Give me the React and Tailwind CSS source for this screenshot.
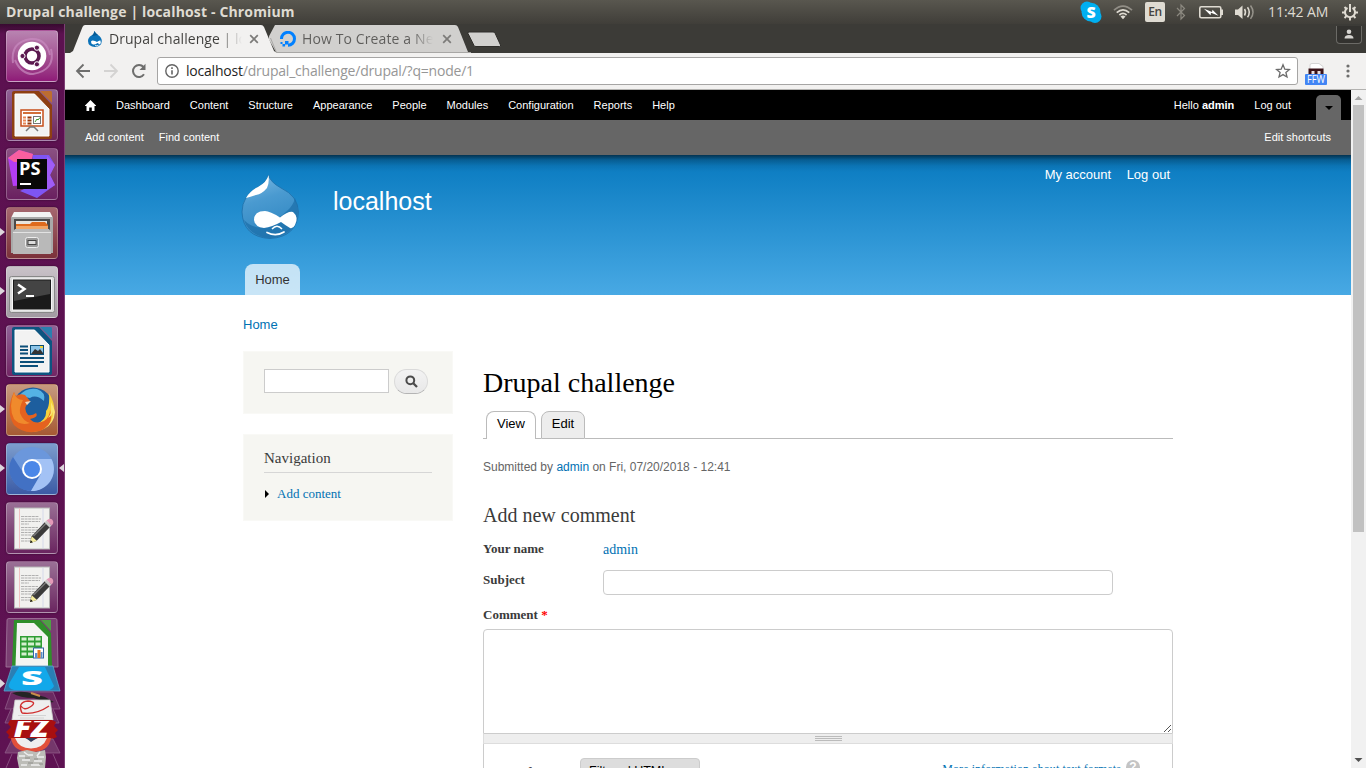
import React from "react";

const ubuntu = "font-['Open_Sans','Noto_Sans',sans-serif]";
const sans = "font-['Liberation_Sans',Arial,sans-serif]";
const serif = "font-['Liberation_Serif',Georgia,serif]";

/* ---------- top panel ---------- */

function TopPanel() {
  return (
    <div className={`${ubuntu} flex h-6 shrink-0 items-center justify-between bg-linear-to-b from-[#59574f] to-[#403e39] pl-1.5 text-[#dfdbd2]`}>
      <span className="text-[14px] leading-6 font-bold whitespace-nowrap tracking-[0.15px]">Drupal challenge | localhost - Chromium</span>
      <div className="flex h-6 w-[286px] items-center">
        <svg className="h-6 w-[22px]" viewBox="0 0 22 24">
          <circle cx="7" cy="8" r="6.5" fill="#00aff0" />
          <circle cx="15" cy="16.5" r="6.5" fill="#00aff0" />
          <circle cx="11" cy="12.2" r="9.4" fill="#00aff0" />
          <text x="11" y="18" textAnchor="middle" fontFamily="Open Sans" fontWeight="800" fontSize="16" fill="#fff">S</text>
        </svg>
        <svg className="ml-[11px] h-6 w-5" viewBox="0 0 20 24" fill="none" stroke="#dfdbd2" strokeWidth="1.7">
          <path d="M1 10.2 Q10 2 19 10.2" opacity=".45" />
          <path d="M3.7 12.6 Q10 7 16.3 12.6" />
          <path d="M6.4 15 Q10 11.8 13.6 15" />
          <path d="M7.5 16.6 Q10 14.4 12.5 16.6 L10 19.3Z" fill="#dfdbd2" stroke="none" />
        </svg>
        <span className="ml-3 flex h-5 w-5 items-center justify-center rounded-[2px] bg-[#dfdbd2] text-[12px] font-semibold text-[#45443f] tracking-[-0.5px]">En</span>
        <svg className="ml-[11px] h-6 w-[10px]" viewBox="0 0 10 24" fill="none" stroke="#8c8980" strokeWidth="1.2">
          <path d="M1 8 L8.5 15.5 L5 19 V5 L8.5 8.5 L1 16" />
        </svg>
        <svg className="ml-[12px] h-6 w-[26px]" viewBox="0 0 26 24">
          <rect x="1.8" y="6.8" width="21" height="11" rx="1.5" fill="none" stroke="#dfdbd2" strokeWidth="1.6" />
          <path d="M23 9.5h2v5.500h-2z" fill="#dfdbd2" />
          <path d="M6 8.800l8 3.200 .5-2.300 6 6-7.500-3-.5 2.500z" fill="#fff" />
        </svg>
        <svg className="ml-[11px] h-6 w-[20px]" viewBox="0 0 20 24" fill="none" stroke="#dfdbd2" strokeWidth="1.5">
          <path d="M0 9.500h3l4.500-4v13.500l-4.500-4H0z" fill="#dfdbd2" stroke="none" />
          <path d="M9.500 9q2 3.200 0 6.500" />
          <path d="M12.500 7.200q3.600 5 0 10" />
          <path d="M15.500 5.500q5 6.700 0 13.400" opacity=".5" />
        </svg>
        <span className="ml-[13px] text-[14px] whitespace-nowrap leading-6 tracking-[-0.05px]">11:42 AM</span>
        <svg className="ml-auto mr-2 h-6 w-4" viewBox="0 0 16 24" fill="none" stroke="#dfdbd2">
          <path d="M5.500 7.800A5 5 0 1 0 10.500 7.800" strokeWidth="2" />
          <path d="M8 4v8" strokeWidth="2" />
          <path d="M0 12.500h3M13 12.500h3M8 17.500v3M2.500 7l2 2M13.500 7l-2 2M2.500 18l2-2M13.500 18l-2-2" strokeWidth="1.900" />
        </svg>
      </div>
    </div>
  );
}

/* ---------- launcher ---------- */

function Tile({ tint, left, right, children }) {
  return (
    <div className="relative flex h-[52px] w-full shrink-0 pl-1.5">
      <div className={`h-[52px] w-[52px] overflow-hidden rounded-[4px] border border-white/25 shadow-[0_0_2px_rgba(0,0,0,0.5)] ${tint}`}>
        <svg className="-m-px h-[52px] w-[52px]" viewBox="0 0 52 52">{children}</svg>
      </div>
      {left && (
        <svg className="absolute left-0 top-[20px] h-[10px] w-[5px]" viewBox="0 0 5 10"><path d="M0 1L5 5L0 9Z" fill="#ddd6dc" /></svg>
      )}
      {right && (
        <svg className="absolute right-0 top-[20px] h-[10px] w-[5px]" viewBox="0 0 5 10"><path d="M5 1L0 5L5 9Z" fill="#ddd6dc" /></svg>
      )}
    </div>
  );
}

function Office({ edge, corner, children }) {
  return (
    <g>
      <path d="M8 2H33L46 16V48Q46 50 44 50H8Q6 50 6 48V4Q6 2 8 2Z" fill={edge} />
      <path d="M34 2H45Q46 2 46 4V14Z" fill={corner} />
      <path d="M9 5H29L43 20V47H9Z" fill="#f2f2f2" stroke="#fff" strokeWidth="1" />
      <path d="M27 3L45 21V17L31 3Z" fill={edge} />
      {children}
    </g>
  );
}

function Notepad() {
  return (
    <g>
      <rect x="8.500" y="6" width="35" height="41" fill="#f1f1ef" stroke="#b5b5b5" />
      <path d="M13.500 6.500v40" stroke="#f0b8b8" strokeWidth=".8" />
      <path d="M37 6.500v40" stroke="#cfd4ea" strokeWidth=".8" />
      <path d="M15 14.500h18M15 17h20M15 19.500h19M15 22h8M15 25.500h17M15 28h19M15 30.500h18M15 33h12M15 36.500h14M15 39h9" stroke="#a0a0a0" strokeWidth=".8" strokeDasharray="3 .6" />
      <path d="M24 41L25.500 34.500L39 20L44 25L30.500 39Z" fill="#3a3a3a" />
      <path d="M27.500 34L40 21.500" stroke="#777" strokeWidth="1.400" />
      <path d="M24 41L25.800 34.200L31 39Z" fill="#f4eb9c" />
      <path d="M24 41l.8-2.800 2 2z" fill="#111" />
      <path d="M38.500 20.500L40.500 18.500L45.500 23.500L43.500 25.500Z" fill="#c9c9c9" />
      <path d="M40.500 18.500Q44 15.500 46.500 18Q48.500 21 45.500 23.500Z" fill="#e49ab8" />
    </g>
  );
}

function FoldedStack() {
  return (
    <svg className="block h-[151px] w-full shrink-0" viewBox="0 617 65 151" preserveAspectRatio="xMinYMin slice">
      <defs>
        <clipPath id="fz"><rect x="0" y="721" width="65" height="18" /></clipPath>
      </defs>
      <path d="M7 620Q7 618.500 9 618.500H55Q57 618.500 57 620L58 667H6Z" fill="#7a3f72" stroke="#a57ba0" strokeWidth=".8" />
      <path d="M14 620H40L51 633L52 666H12Z" fill="#2f8f2a" />
      <path d="M41 620H51V631Z" fill="#4fa045" />
      <path d="M17 623H34L48 637V666H15.500Z" fill="#f4f4f2" />
      <path d="M20 636H42V658H20Z" fill="#2f9e34" />
      <path d="M21.500 637.500h5v3h-5zM28 637.500h6v3h-6zM35.500 637.500h5v3h-5zM21.500 642.500h5v3h-5zM28 642.500h6v3h-6zM35.500 642.500h5v3h-5zM21.500 647.500h5v3h-5zM28 647.500h6v3h-6zM21.500 652.500h5v3h-5zM28 652.500h6v3h-6z" fill="#d6f0d0" />
      <rect x="33.500" y="648" width="10" height="10" fill="#fff" stroke="#3465a4" />
      <path d="M35 653h2.500v5H35zM40.500 652h2v6h-2z" fill="#5b8fd0" />
      <path d="M37.500 650h3v8h-3z" fill="#e8771d" />
      <path d="M12 666H53L60 691H4Z" fill="#2a7fb4" />
      <path d="M12 666H53L60 691H4Z" fill="none" stroke="#5da3cb" strokeWidth=".8" />
      <path d="M19 667H45L54 686Q52 691 45 690H14Q6 688 10 682Z" fill="#12a8ea" />
      <text x="0" y="0" transform="translate(32 684.500) scale(2 1)" textAnchor="middle" fontFamily="Open Sans" fontWeight="800" fontSize="19" fill="#fff">S</text>
      <path d="M0 679L5 683.500L0 688Z" fill="#ddd6dc" />
      <path d="M11 692H53L60 709H5Z" fill="#6b2a62" stroke="#8f5c89" strokeWidth=".8" />
      <path d="M12 693Q22 690 34 694L45 697L54 702L47 703L34 698Q20 698 12 693Z" fill="#242424" />
      <path d="M31 693l9 3" stroke="#c98d4b" strokeWidth="2" />
      <path d="M11 709L5 723H59L53 709" fill="#6b2a62" stroke="#8f5c89" strokeWidth=".8" />
      <path d="M15 700H50L53 720H12Z" fill="#eee" stroke="#ccc" strokeWidth=".8" />
      <path d="M22 713Q17 702 28 701Q38 702 30 707Q24 711 21 706M22 713Q36 715 49 706" fill="none" stroke="#d03030" strokeWidth="1.400" />
      <path d="M18 715.500h28M20 718h24" stroke="#ccc" strokeWidth=".8" />
      <path d="M10 720L8 724L11 727L6 732L9 735L8 738L14 740H50L57 737L55 733L58 730L54 726L56 722L52 720Z" fill="#a80f10" />
      <g clipPath="url(#fz)">
        <text x="0" y="0" transform="translate(31 737) scale(1.150 1)" textAnchor="middle" fontFamily="Open Sans" fontStyle="italic" fontWeight="800" fontSize="27" fill="#fff">FZ</text>
      </g>
      <path d="M12 739H53L60 753H5Z" fill="#74376b" stroke="#8f5c89" strokeWidth=".8" />
      <path d="M11 738Q13 752 31 752Q49 752 51 738H43L36 740H27L20 738Z" fill="#e2503a" />
      <path d="M15 738Q19 748.500 31 748.500Q43 748.500 47 738H38L31 741L25 738Z" fill="#eee" />
      <path d="M26 738H37L31 742Z" fill="#2e3f5c" />
      <path d="M12 754L6 768M53 754L59 768" stroke="#8f5c89" strokeWidth=".8" />
      <path d="M18 752L27 750L36 752L45 750L46 757L45 768H19L17 758Z" fill="#bdbdb8" />
      <path d="M19 756h6M28 755h5M37 757h7M22 760h8M34 761h8M21 765h6M31 765h9M24 752l4 3M40 752l-3 4" stroke="#eee" strokeWidth="1.500" />
      <path d="M25 758h5M34 759h4M28 763h5M39 764h4" stroke="#8e8e8a" strokeWidth="1" />
    </svg>
  );
}

function Launcher() {
  return (
    <nav className="flex w-[65px] shrink-0 flex-col overflow-hidden border-r border-[#7d3f74] bg-linear-to-b from-[#380a30] via-[#5c1150] via-[10px] to-[#5e1252]">
      <div className="flex h-[593px] shrink-0 flex-col gap-[7px] pt-1.5">
        <Tile tint="bg-linear-to-b from-[#b884b1] to-[#8f1a78]">
          <path d="M7 33Q4 12 25 9Q40 8 44 25" fill="none" stroke="#c98bc1" strokeWidth="2" opacity=".7" />
          <path d="M45 19Q50 40 27 44Q15 44 9 30" fill="none" stroke="#c98bc1" strokeWidth="2" opacity=".7" />
          <circle cx="26" cy="26" r="14.300" fill="#fff" />
          <circle cx="26" cy="26" r="7" fill="none" stroke="#5c1a50" strokeWidth="3.600" />
          <g stroke="#fff" strokeWidth="1"><circle cx="16.500" cy="26" r="2.600" fill="#5c1a50" /><circle cx="30.900" cy="17.700" r="2.600" fill="#5c1a50" /><circle cx="30.900" cy="34.300" r="2.600" fill="#5c1a50" /></g>
        </Tile>
        <Tile tint="bg-linear-to-b from-[#8f6296] to-[#6d2457]">
          <Office edge="#8e3f12" corner="#bd6d30">
            <rect x="15" y="21" width="22" height="16" fill="#fff" stroke="#c64e1a" strokeWidth="1.500" />
            <path d="M17 24h18" stroke="#d2703a" strokeWidth="2" />
            <path d="M17 28.500h3M17 31.500h3M17 34.500h3" stroke="#e88757" strokeWidth="2" />
            <path d="M21.500 28.500h4M21.500 31.500h4M21.500 34.500h4" stroke="#96380c" strokeWidth="2" />
            <rect x="27.500" y="27.500" width="7" height="7" fill="#fff" stroke="#777" />
            <path d="M29 33l2-3 1 1 2-2.500" stroke="#3a9c2f" fill="none" />
            <path d="M20 42l4-4h4l4 4" stroke="#777" strokeWidth="1.500" fill="none" />
          </Office>
        </Tile>
        <Tile tint="bg-linear-to-b from-[#8a5082] to-[#6a2060]">
          <path d="M2 10L13 2L27 6L22 37L7 38Z" fill="#b43df5" />
          <path d="M2 10L13 2L27 6L25 14L8 14Z" fill="#f95fa0" />
          <path d="M27 7L43 7L49 17L44 27L49 37L31 50L14 43L24 38Z" fill="#7e55f4" />
          <path d="M41 8L49 17L44 27L49 37L41 42Z" fill="#a05cf6" />
          <rect x="11" y="11" width="30" height="30" fill="#080808" />
          <text x="13" y="26.800" fontFamily="Open Sans" fontWeight="700" fontSize="17.500" textLength="21.500" lengthAdjust="spacingAndGlyphs" fill="#fff">PS</text>
          <path d="M14 36h11" stroke="#fff" strokeWidth="2" />
        </Tile>
        <Tile tint="bg-linear-to-b from-[#a5676f] to-[#7b313a]" left>
          <path d="M8 5H44L47 11H5Z" fill="#f3f3f3" />
          <path d="M5 10H47V46H5Z" fill="#a9a9a9" />
          <path d="M8 12H44V27H8Z" fill="#4a4a4a" />
          <path d="M10 14H41V27H10Z" fill="#e8e4dd" />
          <path d="M10 17H24L26 15H39L42 18V25H10Z" fill="#df6b1d" />
          <path d="M10 19H42V25H10Z" fill="#f2a665" />
          <path d="M7 25L9 22H43L45 25V47H7Z" fill="#b9b9b9" />
          <path d="M7 25.500H45" stroke="#e2e2e2" />
          <rect x="19.500" y="30.500" width="13" height="10" rx="2" fill="#999" stroke="#eee" />
          <rect x="22" y="33.500" width="8" height="4" fill="#ddd" stroke="#444" />
        </Tile>
        <Tile tint="bg-linear-to-b from-[#c9c2c8] to-[#a29aa2]" left>
          <rect x="3.500" y="10.500" width="45" height="36" rx="2" fill="#dcdcdc" stroke="#888" />
          <rect x="6" y="12.500" width="40" height="32" fill="#f6f6f6" />
          <rect x="7" y="13.500" width="38" height="30" fill="#1a1a1a" />
          <path d="M8 14.500H44V28L8 35Z" fill="#444" />
          <path d="M12 18.500L18.500 23L12 27.500" fill="none" stroke="#fff" strokeWidth="2.500" />
          <path d="M20 30h8" stroke="#fff" strokeWidth="2" />
        </Tile>
        <Tile tint="bg-linear-to-b from-[#8f6296] to-[#722564]">
          <Office edge="#0d5480" corner="#2a7fae">
            <path d="M14 21.500h8M14 25h8M14 28.500h8M14 33h24M14 37h24M14 41h18" stroke="#0c4f79" strokeWidth="2" />
            <rect x="24.500" y="20.500" width="13" height="9" fill="#8cc4e8" stroke="#0c4f79" strokeWidth="1" />
            <path d="M25 29l4-5 3 2 2-2 3 4v1z" fill="#333" />
            <path d="M34 21h3v2h-3z" fill="#f3d23b" />
          </Office>
        </Tile>
        <Tile tint="bg-linear-to-b from-[#c79a7f] to-[#a55a33]" left>
          <circle cx="27" cy="23.500" r="20" fill="#1d5e9e" />
          <path d="M13 12Q20 3 31 5Q40 8 38 17Q30 10 24 14Z" fill="#54b2e4" />
          <path d="M43 9Q52 24 46 37Q40 47 26 48L30 40Q41 36 40 27Q44 23 43 9Z" fill="#f5d13c" />
          <path d="M8 8Q9 11 10 12Q14 9 19 11L24 17L20 22Q18 26 22 31Q26 32 30 29Q33 33 24 35Q29 41 38 37Q44 33 44 26Q49 41 34 47Q18 51 8 41Q-1 27 8 8Z" fill="#e4621f" />
          <path d="M45 22Q46 29 42 34Q47 31 47 26Q48 38 38 45Q48 40 49 28Q48 24 45 18Z" fill="#fbe573" />
          <path d="M8 8Q10 16 17 16Q13 24 14 29Q17 37 24 39Q14 42 8 35Q2 23 8 8Z" fill="#f08a2c" />
          <path d="M19 18l6-1-4 4z" fill="#f3d8bb" />
        </Tile>
        <Tile tint="bg-linear-to-b from-[#7d9dcd] to-[#3c5ba5]" left right>
          <circle cx="26" cy="26" r="22" fill="#6b97dc" />
          <path d="M7 14A22 22 0 0 0 25 48L34 32Q26 39 18 31Z" fill="#4271c4" />
          <path d="M26 16H45.500A22 22 0 0 1 25 48L35 31Z" fill="#a3c2f5" />
          <circle cx="26" cy="26" r="10" fill="#fff" />
          <circle cx="26" cy="26" r="8" fill="#4b87e8" />
        </Tile>
        <Tile tint="bg-linear-to-b from-[#9a7096] to-[#6a2560]"><Notepad /></Tile>
        <Tile tint="bg-linear-to-b from-[#9a7096] to-[#6a2560]"><Notepad /></Tile>
      </div>
      <FoldedStack />
    </nav>
  );
}

/* ---------- browser chrome ---------- */

function Druplet({ className }) {
  return (
    <svg className={className} viewBox="0 0 16 16">
      <path d="M7.500 0Q8 2 11 4Q14.800 6.500 14.800 10Q14.500 15.700 8 16Q1.200 15.700 1 10Q1 6.500 4.500 4.500Q7 3 7.500 0Z" fill="#0a72b8" />
      <path d="M7.500 0Q8 2 11 4L5 5Q7 3 7.500 0Z" fill="#055a94" />
      <path d="M4 10.500Q5 8.800 8 10L10 11Q12 9 13.500 9.500Q14.500 12.500 12.800 13.500L10.500 12Q8 14 6 13.500Q3.800 12.800 4 10.500Z" fill="#fff" />
      <path d="M8 14.500q2 .8 3.500-.3" stroke="#fff" fill="none" strokeWidth=".8" />
    </svg>
  );
}

function Cross() {
  return <svg className="h-2.5 w-2.5 shrink-0" viewBox="0 0 10 10"><path d="M1.200 1.200L8.800 8.800M8.800 1.200L1.200 8.800" stroke="#7c7b79" strokeWidth="1.700" /></svg>;
}

function TabStrip() {
  return (
    <div className={`${ubuntu} flex h-[29px] shrink-0 bg-[#3c3b37] pl-[5px] text-[14px]`}>
      <div className="relative z-10 flex h-[29px] w-[207px] shrink-0 items-center pl-[17px]">
        <svg className="absolute inset-0 h-[29px] w-[207px]" viewBox="0 0 207 29">
          <path d="M0 29L3 27L12.500 3Q13.500 1 15 1H191Q193 1 194 3L204 27L207 29Z" fill="#f2f1f0" />
        </svg>
        <Druplet className="relative h-4 w-4" />
        <span className="relative ml-1.5 w-[133px] overflow-hidden whitespace-nowrap bg-linear-to-r from-[#3f3e3c] from-[82%] to-transparent bg-clip-text text-transparent tracking-[0.05px]">Drupal challenge | localhost</span>
        <span className="relative ml-[7px]"><Cross /></span>
      </div>
      <div className="relative -ml-[8px] flex h-[29px] w-[202px] shrink-0 items-center pl-[11px]">
        <svg className="absolute inset-0 h-[29px] w-[202px]" viewBox="0 0 202 29">
          <path d="M-1 14L6 1H186Q188 1 189 3L199 28H7Z" fill="#d1d0ce" />
          <path d="M1.500 14L7.500 28.500H202" fill="none" stroke="#a8a7a5" />
        </svg>
        <svg className="relative h-4 w-4" viewBox="0 0 16 16">
          <path d="M1.500 8A6.500 6.500 0 1 1 8 14.300" fill="none" stroke="#0080ff" strokeWidth="3" />
          <path d="M5 10h3.500v3.500H5zM2.500 13h2.600v2.600H2.500zM.5 11h2v2h-2z" fill="#0080ff" />
        </svg>
        <span className="relative ml-[6px] w-[131px] overflow-hidden whitespace-nowrap bg-linear-to-r from-[#5d5c5a] from-[84%] to-transparent bg-clip-text text-transparent tracking-[0.12px]">How To Create a New User</span>
        <span className="relative ml-[9px]"><Cross /></span>
      </div>
      <svg className="-ml-[5px] h-[29px] w-[36px]" viewBox="0 0 36 29">
        <path d="M3 8H27Q28.500 8 29 9L34.500 21Q35 22.500 33.500 22.500H10Q8.500 22.500 8 21.500L2 9.500Q1.500 8 3 8Z" fill="#d1d0ce" stroke="#2e2d2a" />
      </svg>
      <div className="mr-1 ml-auto mt-0.5 flex h-[18px] w-[26px] items-center justify-center rounded-b-[4px] border border-t-0 border-[#6b6a66] bg-[#33322f]">
        <svg className="-mt-0.5 h-3 w-3" viewBox="0 0 12 12"><circle cx="6" cy="3.800" r="2.300" fill="#d6d4d0" /><path d="M1.500 10.500Q1.500 7 6 7Q10.500 7 10.500 10.500Z" fill="#d6d4d0" /></svg>
      </div>
    </div>
  );
}

function AddressRow() {
  return (
    <div className="flex h-[37px] shrink-0 items-center border-b border-[#b3b2b0] bg-[#f2f1f0] pl-2.5">
      <svg className="h-4 w-4" viewBox="0 0 16 16" fill="none" stroke="#6e6e6d" strokeWidth="1.800"><path d="M15 8H2.500M8.500 1.500L2 8L8.500 14.500" /></svg>
      <svg className="ml-3 h-4 w-4" viewBox="0 0 16 16" fill="none" stroke="#d4d3d2" strokeWidth="1.800"><path d="M1 8H13.500M7.500 1.500L14 8L7.500 14.500" /></svg>
      <svg className="ml-3 h-4 w-4" viewBox="0 0 16 16"><path d="M13 11.300A6 6 0 1 1 12.500 4" fill="none" stroke="#6e6e6d" strokeWidth="2" /><path d="M14.500 .8V7H8.500Z" fill="#6e6e6d" /></svg>
      <div className="ml-[10px] flex h-7 w-[1141px] items-center rounded-[3px] border border-[#a6a5a4] bg-white pl-1.5">
        <svg className="h-4 w-4" viewBox="0 0 16 16"><circle cx="8" cy="8" r="6.200" fill="none" stroke="#646464" strokeWidth="1.400" /><path d="M8 7.200v4.300M8 4.200v1.700" stroke="#646464" strokeWidth="1.600" /></svg>
        <span className={`${ubuntu} ml-1.5 whitespace-nowrap text-[14px] leading-6 text-[#969696] tracking-[-0.21px]`}>
          <span className="text-[#1f1f1f]">localhost</span>/drupal_challenge/drupal/?q=node/1
        </span>
        <svg className="mr-[6px] ml-auto h-4 w-4" viewBox="0 0 16 16"><path d="M8 1.800L9.800 6.200L14.400 6.500L10.900 9.500L12 14L8 11.600L4 14L5.100 9.500L1.600 6.500L6.200 6.200Z" fill="none" stroke="#6b6b6b" strokeWidth="1.300" /></svg>
      </div>
      <svg className="mt-[3px] ml-[6px] h-[26px] w-6" viewBox="0 0 24 26">
        <path d="M6 5Q6 3.500 8 3.500H15L19 6.500V16H6Z" fill="#fff" stroke="#ccc" strokeWidth=".8" />
        <path d="M4.500 8.500H19.500V14.500H4.500Z" fill="#3a1218" />
        <path d="M7.500 11h3v3h-3zM13.500 11h3v3h-3z" fill="#e9dede" />
        <rect x="1" y="14" width="22" height="11" rx="1" fill="#4285f4" />
        <text x="12" y="23.400" textAnchor="middle" fontFamily="Open Sans" fontSize="10.500" textLength="18" lengthAdjust="spacingAndGlyphs" fill="#fff">FFW</text>
      </svg>
      <svg className="ml-[18px] h-4 w-1" viewBox="0 0 4 16" fill="#6e6e6d"><circle cx="2" cy="3" r="1.600" /><circle cx="2" cy="8" r="1.600" /><circle cx="2" cy="13" r="1.600" /></svg>
    </div>
  );
}

/* ---------- page ---------- */

function AdminBar() {
  const items = ["Dashboard", "Content", "Structure", "Appearance", "People", "Modules", "Configuration", "Reports", "Help"];
  return (
    <div className={`${sans} shrink-0 text-[11px] text-white`}>
      <div className="flex h-[30px] items-center bg-black pr-2.5 pl-5">
        <svg className="h-[11px] w-[11px]" viewBox="0 0 11 11"><path d="M5.500 0L11 5.500V6H9.500V11H6.800V7.500H4.200V11H1.500V6H0V5.500Z" fill="#fff" /></svg>
        <ul className="ml-5 flex gap-5">
          {items.map((t) => <li key={t}>{t}</li>)}
        </ul>
        <span className="mr-5 ml-auto">Hello <b>admin</b></span>
        <span className="mr-[25px]">Log out</span>
        <span className="mt-[5px] flex h-[25px] w-[25px] items-center justify-center rounded-t-[5px] bg-[#666]">
          <svg className="h-1 w-[8px]" viewBox="0 0 8 4"><path d="M0 0H8L4 4Z" fill="#000" /></svg>
        </span>
      </div>
      <div className="flex h-[35px] items-center gap-[15px] bg-[#666] px-5">
        <span>Add content</span>
        <span>Find content</span>
        <span className="ml-auto">Edit shortcuts</span>
      </div>
    </div>
  );
}

function Logo() {
  return (
    <svg className="h-[65px] w-[58px] shrink-0" viewBox="0 0 58 65">
      <defs>
        <linearGradient id="drop" x1="0" y1="0" x2="0.300" y2="1">
          <stop offset="0" stopColor="#7fbce4" />
          <stop offset=".45" stopColor="#4a9ad0" />
          <stop offset="1" stopColor="#3087c2" />
        </linearGradient>
      </defs>
      <path d="M27.500 1Q29 8 40 14Q57 22 57.500 38Q56 63 29 64.500Q2 63 1 38Q1 22 17 13Q26 8 27.500 1Z" fill="url(#drop)" stroke="#1d6ea8" strokeWidth=".8" />
      <path d="M54 24Q52 32 46 37Q34 48 22 53Q12 55 3 46Q8 62 29 64Q55 62 57 38Q57 31 54 24Z" fill="#1b6ea8" opacity=".7" />
      <path d="M27.500 1Q28.500 9 26 14Q21 20 15 21Q9 23 5 24Q9 17 17 13Q26 8 27.500 1Z" fill="#fff" />
      <path d="M13 46Q13 37 24 37Q29 37 39 43.500Q47 37 52 38Q58 43 54 51Q52 55 49 54Q44 51 40 48Q31 53 23 54Q14 53 13 46Z" fill="#fff" />
      <path d="M31 55Q36 49.500 41 55" fill="none" stroke="#fff" strokeWidth="1.500" />
      <path d="M26 58.500Q35 63 43 58" fill="none" stroke="#fff" strokeWidth="1.700" strokeLinecap="round" />
    </svg>
  );
}

function Header() {
  return (
    <header className={`${sans} flex h-[140px] shrink-0 flex-col justify-between bg-[linear-gradient(to_bottom,rgba(0,0,0,0.58)_0px,rgba(0,0,0,0.24)_5px,rgba(0,0,0,0.07)_11px,rgba(0,0,0,0)_17px),linear-gradient(to_bottom,#0779bf_0%,#48a9e4_100%)] pr-[181px] pl-[176px] text-white`}>
      <div className="flex items-start">
        <div className="pt-[19px]"><Logo /></div>
        <span className="ml-[34px] pt-[31px] text-[25px] leading-[30px]">localhost</span>
        <div className="ml-auto flex gap-[15.500px] pt-3 text-[13px] leading-[15px]">
          <span>My account</span>
          <span>Log out</span>
        </div>
      </div>
      <div className="ml-1 flex h-[31px] w-[55px] items-center justify-center rounded-t-[8px] bg-white/70 text-[13px] text-[#333]">Home</div>
    </header>
  );
}

function Sidebar() {
  return (
    <aside className={`${serif} flex w-[210px] flex-col gap-5 pt-[10px]`}>
      <div className="flex h-[63px] items-start gap-[5px] border border-[#f9f9f6] bg-[#f6f6f2] pt-[17px] pl-5">
        <div className="h-6 w-[125px] border border-[#ccc] bg-white" />
        <div className="flex h-[25px] w-[34px] items-center justify-center rounded-full border border-[#dadada] border-b-[#b4b4b4] bg-linear-to-b from-[#f3f3f3] to-[#e8e8e8]">
          <svg className="h-[13px] w-[13px]" viewBox="0 0 13 13" fill="none" stroke="#4b4b4b"><circle cx="5.300" cy="5.300" r="3.900" strokeWidth="2" /><path d="M8.300 8.300L12 12" strokeWidth="2.300" /></svg>
        </div>
      </div>
      <div className="h-[87px] border border-[#f9f9f6] bg-[#f6f6f2] px-5 pt-[14px]">
        <h2 className="h-6 border-b border-[#d6d6d6] text-[15px] leading-[18px] text-[#3b3b3b]">Navigation</h2>
        <div className="mt-[13px] flex items-center text-[13px] leading-4 text-[#0071b3]">
          <svg className="-mt-px mr-2 h-[8px] w-[5px]" viewBox="0 0 5 8"><path d="M1 0L5 4L1 8Z" fill="#000" /></svg>
          Add content
        </div>
      </div>
    </aside>
  );
}

function Article() {
  return (
    <main className={`${serif} flex w-[690px] flex-col text-[#3b3b3b]`}>
      <h1 className="mt-[26px] text-[28px] leading-8 text-black">Drupal challenge</h1>
      <div className={`${sans} mt-3 flex h-7 items-end text-[13px] text-black`}>
        <span className="h-7 w-[3px] border-b border-[#bbb]" />
        <span className="h-7 w-[50px] rounded-t-[8px] border border-b-0 border-[#bbb] bg-white text-center leading-[24px]">View</span>
        <span className="h-7 w-[5px] border-b border-[#bbb]" />
        <span className="h-7 w-[44px] rounded-t-[8px] border border-[#bbb] bg-[#ededed] text-center leading-[24px]">Edit</span>
        <span className="h-7 flex-1 border-b border-[#bbb]" />
      </div>
      <p className={`${sans} mt-5 text-[12px] leading-4 text-[#656565]`}>Submitted by <span className="text-[#0071b3]">admin</span> on Fri, 07/20/2018 - 12:41</p>
      <h2 className="mt-[28px] text-[20px] leading-6">Add new comment</h2>
      <div className="mt-[14px] flex h-4 text-[13px] leading-4 font-bold">
        <span className="w-[120px]">Your name</span>
        <span className="text-[14px] leading-[18px] font-normal text-[#0071b3]">admin</span>
      </div>
      <div className="mt-[13px] flex text-[13px] font-bold">
        <span className="w-[120px] leading-5">Subject</span>
        <span className="h-[25px] w-[510px] rounded-[4px] border border-[#ccc]" />
      </div>
      <div className="mt-3 text-[13px] leading-4 font-bold">Comment <span className="text-[#f00]">*</span></div>
      <div className="mt-[6px] flex h-[105px] items-end justify-end rounded-t-[4px] border border-[#ccc] p-px">
        <svg className="h-2 w-2" viewBox="0 0 8 8" shapeRendering="crispEdges"><path d="M1 8L8 1M5 8L8 5" stroke="#555" fill="none" /></svg>
      </div>
      <div className="flex h-[10px] flex-col items-center gap-px border border-t-0 border-[#ddd] bg-[#eee] pt-[2px]">
        <span className="h-px w-[27px] bg-[#bbb]" />
        <span className="h-px w-[27px] bg-[#bbb]" />
        <span className="h-px w-[27px] bg-[#bbb]" />
      </div>
      <div className="flex h-20 items-start border-x border-[#ccc] pt-[14px] pl-4">
        <span className="mt-[6px] w-[80px] text-[13px] leading-4 font-bold">Text format</span>
        <span className={`${sans} flex h-6 w-[120px] rounded-[4px] border border-[#ccc] bg-[#ddd] pt-[3.500px] pl-2 text-[12.500px] leading-4 text-black`}>Filtered HTML</span>
        <span className="mt-[3px] mr-[5px] ml-auto text-[12px] leading-4 tracking-[0.080px] text-[#0071b3]">More information about text formats</span>
        <span className={`${sans} mt-[2px] mr-[32px] flex h-[14px] w-[14px] items-center justify-center rounded-full bg-[#c4c4c4] text-[12px] font-bold text-white`}>?</span>
      </div>
    </main>
  );
}

function Scrollbar() {
  return (
    <div className="flex w-[15px] shrink-0 flex-col items-center bg-[#f1f1f1]">
      <svg className="h-[15px] w-[15px]" viewBox="0 0 15 15"><path d="M3.500 10L7.500 6L11.500 10Z" fill="#a3a3a3" /></svg>
      <div className="h-[427px] w-[11px] bg-[#c1c1c1]" />
      <svg className="mt-auto h-[17px] w-[15px]" viewBox="0 0 15 17"><path d="M3.500 7L7.500 11L11.500 7Z" fill="#505050" /></svg>
    </div>
  );
}

export default function App() {
  return (
    <div className="flex h-[768px] w-[1366px] flex-col overflow-hidden bg-white">
      <TopPanel />
      <div className="flex min-h-0 flex-1">
        <Launcher />
        <div className="flex min-w-0 flex-1 flex-col">
          <TabStrip />
          <AddressRow />
          <div className="flex min-h-0 flex-1">
            <div className="flex min-w-0 flex-1 flex-col overflow-hidden">
              <AdminBar />
              <Header />
              <div className={`${sans} h-[46px] shrink-0 pt-[22px] pl-[178px] text-[13px] leading-[15px] text-[#0071b3]`}>Home</div>
              <div className="flex items-start gap-[30px] pl-[178px]">
                <Sidebar />
                <Article />
              </div>
            </div>
            <Scrollbar />
          </div>
        </div>
      </div>
    </div>
  );
}
